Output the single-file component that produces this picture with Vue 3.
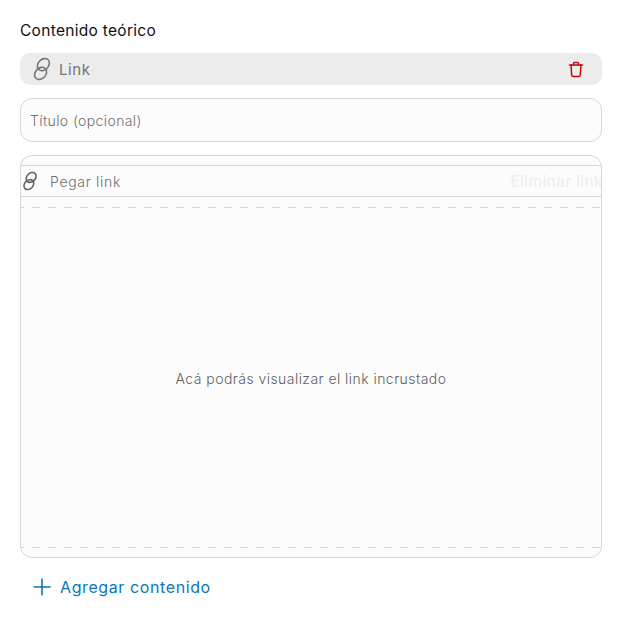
<script setup>
const title = "Contenido teórico";
</script>

<template>
  <div class="page">
    <h3 class="heading">{{ title }}</h3>

    <div class="type-bar">
      <svg class="link-icon" width="22" height="24" viewBox="0 0 22 24" fill="none" stroke="#757575" stroke-width="1.6">
        <ellipse cx="12.4" cy="7.6" rx="6.8" ry="5.2" transform="rotate(-46 12.4 7.6)" />
        <ellipse cx="9.6" cy="16.4" rx="6.8" ry="5.2" transform="rotate(-46 9.6 16.4)" />
      </svg>
      <span class="type-label">Link</span>
      <svg class="trash" width="16" height="17" viewBox="0 0 16 17" fill="none" stroke="#b80d0d" stroke-width="1.5" stroke-linejoin="round" stroke-linecap="round">
        <path d="M1.5 4h13" />
        <path d="M5.5 4V2.6c0-.6.4-1 1-1h3c.6 0 1 .4 1 1V4" />
        <path d="M3 4l.7 10c.1.9.7 1.5 1.6 1.5h5.4c.9 0 1.5-.6 1.6-1.5L13 4" />
      </svg>
    </div>

    <div class="title-input">Título (opcional)</div>

    <div class="embed-box">
      <div class="link-row">
        <svg class="row-icon" width="18" height="20" viewBox="0 0 22 24" fill="none" stroke="#616161" stroke-width="1.9">
          <ellipse cx="12.4" cy="7.6" rx="6.8" ry="5.2" transform="rotate(-46 12.4 7.6)" />
          <ellipse cx="9.6" cy="16.4" rx="6.8" ry="5.2" transform="rotate(-46 9.6 16.4)" />
        </svg>
        <span class="paste">Pegar link</span>
        <span class="remove">Eliminar link</span>
      </div>
      <div class="preview">
        <span>Acá podrás visualizar el link incrustado</span>
      </div>
    </div>

    <div class="add">
      <svg width="18" height="18" viewBox="0 0 18 18" fill="none" stroke="#0a77b8" stroke-width="1.6">
        <path d="M9 0.5v17M0.5 9h17" />
      </svg>
      <span>Agregar contenido</span>
    </div>
  </div>
</template>

<style scoped>
.page {
  width: 582px;
  height: 623px;
  padding: 20px 20px 0;
  font-family: "Inter", "Noto Sans", sans-serif;
  color: #757575;
  background: #fff;
}

.heading {
  margin: 0;
  height: 33px;
  font-size: 15.5px;
  line-height: 21px;
  font-weight: 400;
  letter-spacing: 0.3px;
  color: #111;
}

.type-bar {
  display: flex;
  align-items: center;
  height: 32px;
  padding: 0 18px 0 11px;
  border-radius: 10px;
  background: #ececec;
}

.link-icon {
  margin-right: 6px;
}

.type-label {
  flex: 1;
  font-size: 15px;
  font-weight: 400;
  letter-spacing: 0.6px;
}

.title-input {
  display: flex;
  align-items: center;
  box-sizing: border-box;
  height: 44px;
  margin-top: 13px;
  padding: 0 9px;
  border: 1px solid #d6d6d6;
  border-radius: 12px;
  background: #fcfcfc;
  font-size: 14px;
  font-weight: 300;
  letter-spacing: 0.4px;
  color: #707070;
}

.embed-box {
  box-sizing: border-box;
  height: 403px;
  margin-top: 13px;
  padding-top: 9px;
  display: flex;
  flex-direction: column;
  border: 1px solid #d6d6d6;
  border-radius: 12px;
  background: #fcfcfc;
  overflow: hidden;
}

.link-row {
  display: flex;
  align-items: center;
  box-sizing: border-box;
  height: 32px;
  border-top: 1px solid #d6d6d6;
  border-bottom: 1px solid #d6d6d6;
  font-size: 14px;
}

.row-icon {
  margin-right: 11px;
}

.paste {
  flex: 1;
  font-weight: 300;
  letter-spacing: 0.7px;
  color: #707070;
}

.remove {
  margin-right: -2px;
  font-size: 15.5px;
  font-weight: 400;
  letter-spacing: 0.4px;
  color: #eeeeee;
  white-space: nowrap;
}

/* rayas largas: el borde dashed del navegador queda muy corto */
.preview {
  flex: 1;
  display: flex;
  align-items: center;
  justify-content: center;
  margin: 10px 0 9px;
  padding-top: 1px;
  background-image:
    repeating-linear-gradient(90deg, #d6d6d6 0 3px, transparent 3px 11px, #d6d6d6 11px 16px),
    repeating-linear-gradient(90deg, #d6d6d6 0 3px, transparent 3px 11px, #d6d6d6 11px 16px);
  background-size: 100% 1px;
  background-position: 0 0, 0 100%;
  background-repeat: no-repeat;
  font-size: 14px;
  font-weight: 300;
  letter-spacing: 0.45px;
  color: #606060;
}

.add {
  display: flex;
  align-items: center;
  gap: 9px;
  margin-top: 19px;
  margin-left: 13px;
  font-size: 16px;
  font-weight: 400;
  letter-spacing: 0.6px;
  color: #0a77b8;
}
</style>
